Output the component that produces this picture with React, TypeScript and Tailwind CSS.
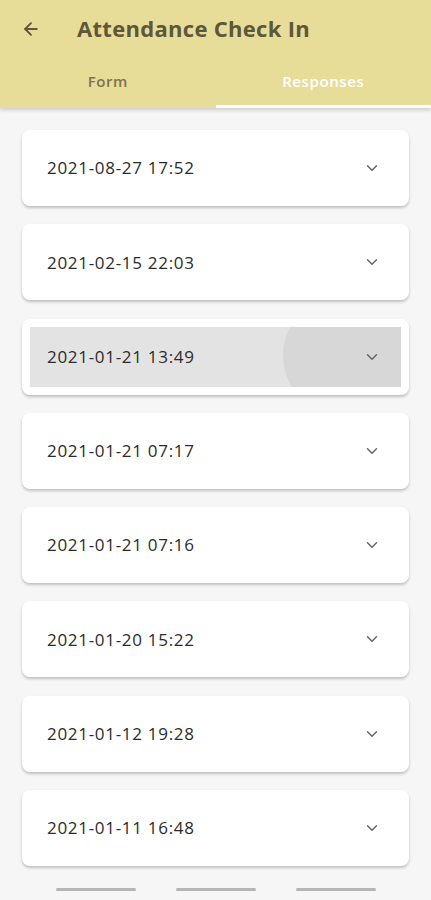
import { ArrowLeft, ChevronDown } from 'lucide-react'

const responses = [
  '2021-08-27 17:52',
  '2021-02-15 22:03',
  '2021-01-21 13:49',
  '2021-01-21 07:17',
  '2021-01-21 07:16',
  '2021-01-20 15:22',
  '2021-01-12 19:28',
  '2021-01-11 16:48',
]

export default function App() {
  return (
    <div className="w-[431px] h-[900px] overflow-hidden bg-[#f6f6f6] flex flex-col" style={{ fontFamily: '"Open Sans", Roboto, sans-serif' }}>
      {/* Header */}
      <div className="bg-[#e7dc98] shadow-[0_2px_4px_rgba(0,0,0,0.18)] z-10">
        <div className="h-[57px] flex items-center">
          <ArrowLeft size={20} strokeWidth={2.2} className="ml-[21px] text-[#5d5839]" />
          <h1 className="ml-[36px] text-[22px] font-bold tracking-[0.3px] text-[#5d5839]">Attendance Check In</h1>
        </div>
        <div className="flex h-[51px]">
          <div className="flex-1 flex items-center justify-center text-[15px] font-semibold tracking-[0.5px] text-[#7a7450] pb-[3px]">Form</div>
          <div className="flex-1 flex flex-col">
            <div className="flex-1 flex items-center justify-center text-[15px] font-semibold tracking-[0.6px] text-white">Responses</div>
            <div className="h-[3px] bg-white" />
          </div>
        </div>
      </div>

      {/* Responses list */}
      <div className="flex flex-col gap-[18.3px] px-[22px] pt-[22px]">
        {responses.map((r, i) => (
          <div key={r + i} className="bg-white rounded-[8px] shadow-[0_2px_3px_rgba(0,0,0,0.22)] h-[76px] flex">
            {i === 2 ? (
              <div className="m-[8px] flex-1 bg-[#e3e3e3] flex items-center relative overflow-hidden">
                <div className="absolute right-0 top-[-30px] w-[118px] h-[117px] rounded-l-full bg-[#d7d7d7]" />
                <span className="relative pl-[17px] text-[17px] tracking-[0.7px] text-[#2b2b2b]">{r}</span>
                <ChevronDown size={18} strokeWidth={2} className="relative ml-auto mr-[20px] text-[#666]" />
              </div>
            ) : (
              <div className="flex-1 flex items-center">
                <span className="pl-[25px] text-[17px] tracking-[0.7px] text-[#2b2b2b]">{r}</span>
                <ChevronDown size={18} strokeWidth={2} className="ml-auto mr-[28px] text-[#666]" />
              </div>
            )}
          </div>
        ))}
      </div>

      {/* Bottom nav bars */}
      <div className="mt-auto h-[14px] flex justify-center gap-[40px] pt-[2px]">
        <div className="w-[80px] h-[3px] rounded-full bg-[#b5b5b5]" />
        <div className="w-[80px] h-[3px] rounded-full bg-[#b5b5b5]" />
        <div className="w-[80px] h-[3px] rounded-full bg-[#b5b5b5]" />
      </div>
    </div>
  )
}
